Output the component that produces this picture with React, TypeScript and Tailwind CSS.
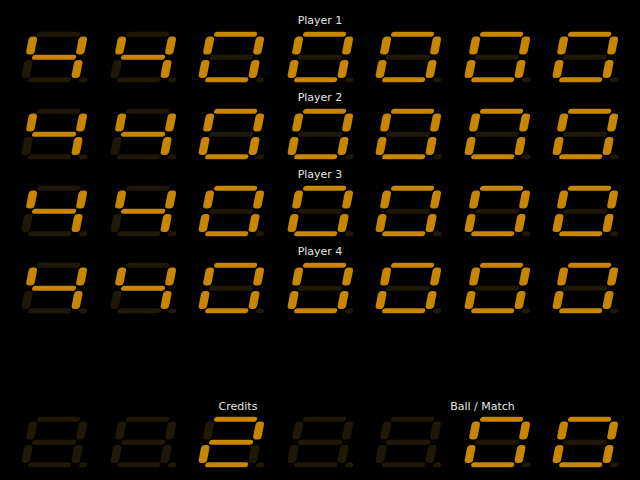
const LIT = "#c88500";
const DIM = "#201806";

// segments lit for each glyph, blank = nothing lit
const GLYPHS: Record<string, string> = {
  "0": "abcdef",
  "2": "abged",
  "4": "bcfg",
  " ": "",
};

function Digit({ ch }: { ch: string }) {
  const on = GLYPHS[ch] ?? "";
  const c = (s: string) => (on.includes(s) ? LIT : DIM);
  return (
    <svg width="70" height="51" viewBox="0 0 70 51" className="shrink-0 overflow-visible">
      <g transform="translate(7 0) skewX(-11)">
        <rect x="8.5" y="-0.2" width="43" height="5" rx="2.5" fill={c("a")} />
        <rect x="51" y="4.5" width="8.5" height="18" rx="3.5" fill={c("b")} />
        <rect x="51" y="28" width="8.5" height="18" rx="3.5" fill={c("c")} />
        <rect x="8.5" y="45.3" width="43" height="5" rx="2.5" fill={c("d")} />
        <rect x="1" y="28" width="8.5" height="18" rx="3.5" fill={c("e")} />
        <rect x="1" y="4.5" width="8.5" height="18" rx="3.5" fill={c("f")} />
        <rect x="8" y="22.8" width="44" height="5" rx="2.5" fill={c("g")} />
        <ellipse cx="63.5" cy="47.75" rx="4.2" ry="2.6" fill={DIM} />
      </g>
    </svg>
  );
}

function DigitRow({ text }: { text: string }) {
  return (
    <div className="flex gap-[18.5px] pl-[22px]">
      {text.split("").map((ch, i) => (
        <Digit key={i} ch={ch} />
      ))}
    </div>
  );
}

const players = ["Player 1", "Player 2", "Player 3", "Player 4"];

export default function App() {
  return (
    <div
      className="h-[480px] w-[640px] overflow-hidden bg-black pt-[14px] text-[11px] leading-[13px] text-[#e4e4e4]"
      style={{ fontFamily: '"DejaVu Sans", sans-serif' }}
    >
      {players.map((p) => (
        <div key={p} className="h-[77px]">
          <div className="h-[13px] text-center">{p}</div>
          <div className="mt-[5px]">
            <DigitRow text="4400000" />
          </div>
        </div>
      ))}

      <div className="mt-[78px]">
        <div className="flex h-[13px]">
          <div className="ml-[200px] w-[76px] text-center">Credits</div>
          <div className="ml-[144px] w-[125px] text-center">Ball / Match</div>
        </div>
        <div className="mt-[4px]">
          <DigitRow text={"  2  00"} />
        </div>
      </div>
    </div>
  );
}
